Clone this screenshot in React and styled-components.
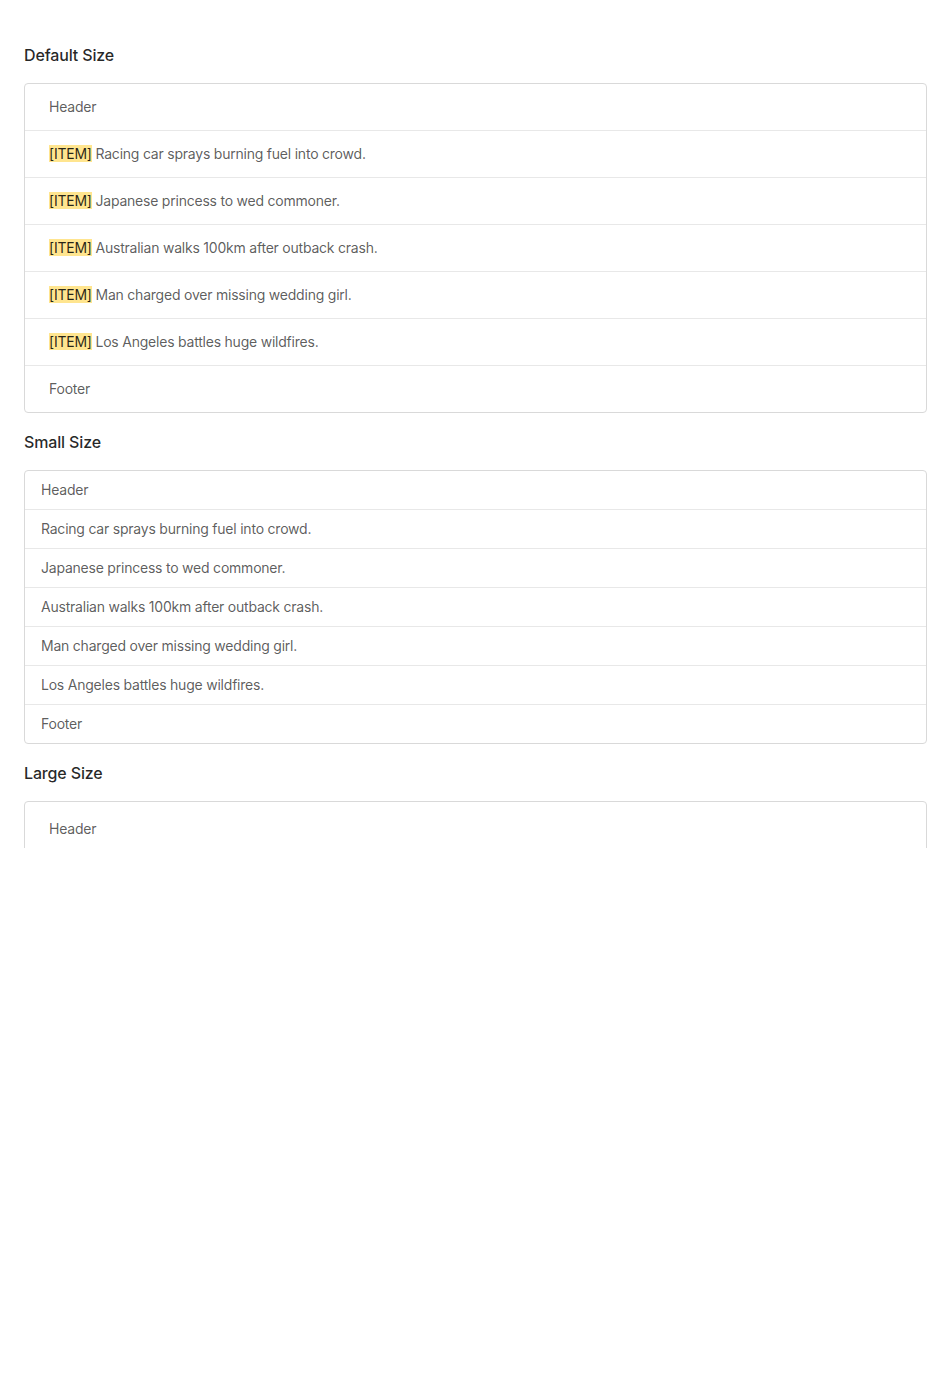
import * as React from "react";
import styled, { createGlobalStyle } from "styled-components";

const GlobalStyle = createGlobalStyle`
  body {
    margin: 0;
    background: #fff;
    font-family: Inter, "Noto Sans", "Liberation Sans", sans-serif;
    font-size: 14px;
    color: rgba(0, 0, 0, 0.65);
  }
`;

const data = [
  "Racing car sprays burning fuel into crowd.",
  "Japanese princess to wed commoner.",
  "Australian walks 100km after outback crash.",
  "Man charged over missing wedding girl.",
  "Los Angeles battles huge wildfires.",
];

const pads = {
  default: "12px 24px",
  small: "8px 16px",
  large: "16px 24px",
};

function App() {
  return (
    <Frame>
      <GlobalStyle />
      <Page>
        <Title>Default Size</Title>
        <List>
          <Row size="default">Header</Row>
          {data.map((el, i) => (
            <Row size="default" key={`d-${i}`}>
              <Mark>[ITEM]</Mark> {el}
            </Row>
          ))}
          <Row size="default">Footer</Row>
        </List>

        <Title>Small Size</Title>
        <List>
          <Row size="small">Header</Row>
          {data.map((el, i) => (
            <Row size="small" key={`s-${i}`}>
              {el}
            </Row>
          ))}
          <Row size="small">Footer</Row>
        </List>

        <Title>Large Size</Title>
        {/* the rest of this list falls below the visible frame */}
        <List>
          <Row size="large">Header</Row>
        </List>
      </Page>
    </Frame>
  );
}

const Frame = styled.div`
  width: 100%;
  height: 848px;
  overflow: hidden;
`;

const Page = styled.div`
  padding: 26px 24px 24px;
  display: flex;
  flex-direction: column;
`;

const Title = styled.h4`
  margin: 17px 0 16px;
  font-size: 16px;
  line-height: 24px;
  font-weight: 500;
  letter-spacing: -0.15px;
  color: rgba(0, 0, 0, 0.85);
`;

const List = styled.div`
  border: 1px solid #d9d9d9;
  border-radius: 4px;
  display: flex;
  flex-direction: column;
  min-height: 120px;
`;

const Row = styled.div`
  padding: ${(p) => pads[p.size]};
  line-height: 22px;
  letter-spacing: -0.22px;
  border-bottom: 1px solid #e8e8e8;
  &:last-child {
    border-bottom: none;
  }
`;

const Mark = styled.mark`
  background: #ffe58f;
  color: rgba(0, 0, 0, 0.85);
  padding: 0;
`;

export default App;
